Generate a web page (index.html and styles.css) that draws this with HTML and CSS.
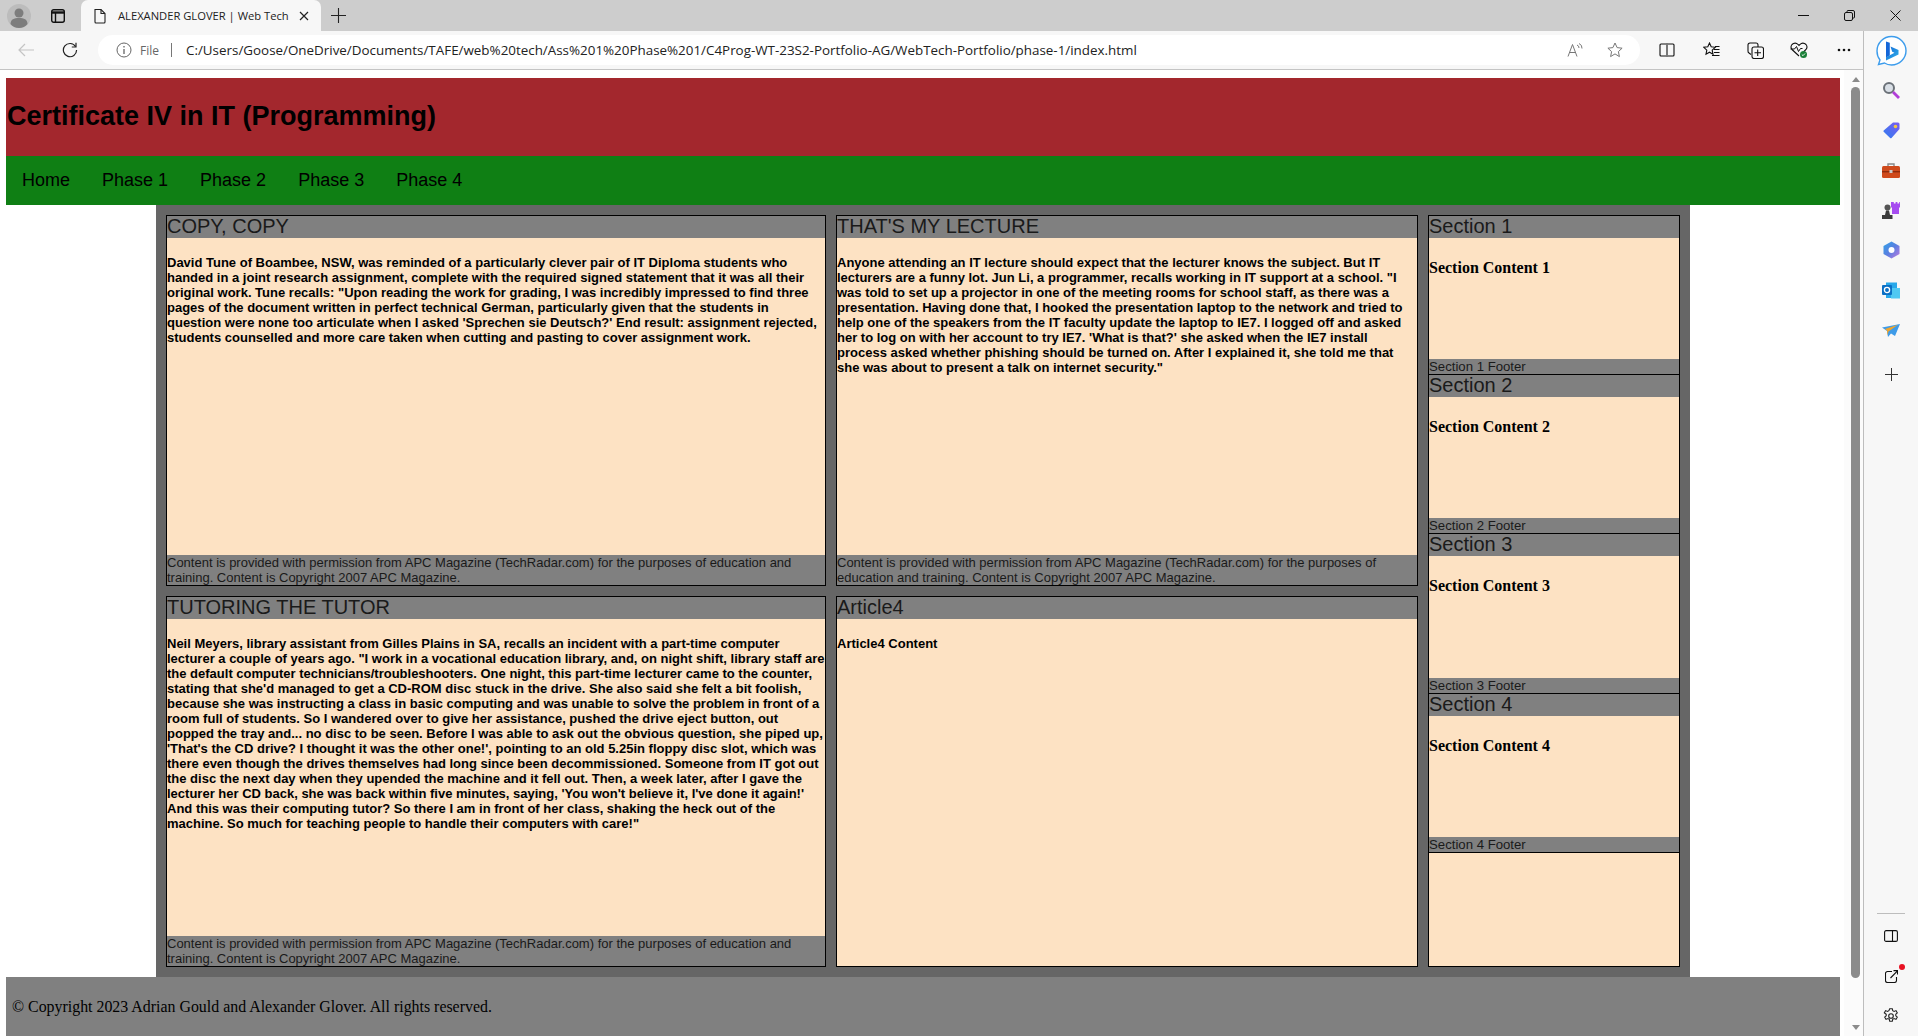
FILE: index.html
```html
<!DOCTYPE html>
<html lang="en">

<head>
  <meta charset="UTF-8">
  <meta name="viewport" content="width=device-width, initial-scale=1.0">
  <title>ALEXANDER GLOVER | Web Tech</title>
  <link rel="stylesheet" href="styles.css">
</head>

<body>
  <div class="tabbar">
    <span class="avatar">
      <svg width="24" height="24" viewBox="0 0 24 24"><circle cx="12" cy="12" r="12" fill="#bcbcbc"/><circle cx="12" cy="9" r="4.500" fill="#7d7d7d"/><path d="M3.500 20c0-4.500 3.500-6 8.500-6s8.500 1.500 8.500 6c-2 2.500-5 4-8.500 4s-6.500-1.500-8.500-4z" fill="#7d7d7d"/></svg>
    </span>
    <span class="tab-actions">
      <svg width="16" height="16" viewBox="0 0 16 16" fill="none" stroke="#111" stroke-width="1.400"><rect x="1.700" y="1.700" width="12.600" height="12.600" rx="2"/><path d="M1.700 4.500h12.600" stroke-width="2.400"/><path d="M5.500 5v9.300"/></svg>
    </span>
    <div class="tab">
      <svg width="14" height="16" viewBox="0 0 14 16" fill="none" stroke="#222" stroke-width="1.100"><path d="M2 1.500h6l4 4v8.500a1 1 0 0 1-1 1H3a1 1 0 0 1-1-1z"/><path d="M8 1.500v4h4"/></svg>
      <span class="tab-title">ALEXANDER GLOVER | Web Tech</span>
      <svg class="tab-close" width="10" height="10" viewBox="0 0 10 10" stroke="#222" stroke-width="1.200"><path d="M1 1l8 8M9 1l-8 8"/></svg>
    </div>
    <span class="tab-new">
      <svg width="15" height="15" viewBox="0 0 15 15" stroke="#222" stroke-width="1.100"><path d="M7.500 0v15M0 7.500h15"/></svg>
    </span>
    <div class="win-controls">
      <span><svg width="11" height="11" viewBox="0 0 11 11" stroke="#111" stroke-width="1"><path d="M0 5.500h11"/></svg></span>
      <span><svg width="11" height="11" viewBox="0 0 11 11" fill="none" stroke="#111" stroke-width="1"><rect x="0.500" y="2.500" width="8" height="8" rx="1.500"/><path d="M3 2.500V1.500a1 1 0 0 1 1-1h5a1.500 1.500 0 0 1 1.500 1.500v5a1 1 0 0 1-1 1h-1"/></svg></span>
      <span><svg width="11" height="11" viewBox="0 0 11 11" stroke="#111" stroke-width="1"><path d="M0.500 0.500l10 10M10.500 0.500l-10 10"/></svg></span>
    </div>
  </div>

  <div class="window">
    <div class="browser">
      <div class="toolbar">
        <span class="tool-btn">
          <svg width="16" height="14" viewBox="0 0 16 14" fill="none" stroke="#c4c4c4" stroke-width="1.200"><path d="M1 7h15M7 1L1 7l6 6"/></svg>
        </span>
        <span class="tool-btn">
          <svg width="16" height="16" viewBox="0 0 16 16" fill="none" stroke="#222" stroke-width="1.200"><path d="M13.600 4.600A6.600 6.600 0 1 0 14.600 8"/><path d="M14 0.800v4.200H9.800"/></svg>
        </span>
        <div class="address">
          <svg width="16" height="16" viewBox="0 0 16 16" fill="none" stroke="#666" stroke-width="1"><circle cx="8" cy="8" r="7"/><path d="M8 7v5M8 4v1.600" stroke-width="1.300"/></svg>
          <span class="addr-file">File</span>
          <span class="addr-sep"></span>
          <span class="addr-url">C:/Users/Goose/OneDrive/Documents/TAFE/web%20tech/Ass%201%20Phase%201/C4Prog-WT-23S2-Portfolio-AG/WebTech-Portfolio/phase-1/index.html</span>
          <svg width="16" height="16" viewBox="0 0 16 16" fill="none" stroke="#777" stroke-width="1"><path d="M1 14.500L5.500 2.500 10 14.500M2.600 10.500h5.800"/><path d="M10 3a3 3 0 0 1 2 3M12 1.500a5 5 0 0 1 3 5"/></svg>
          <svg class="addr-star" width="16" height="16" viewBox="0 0 16 16" fill="none" stroke="#777" stroke-width="1"><path d="M8 1l2.100 4.600 5 .6-3.700 3.400 1 5L8 11.900l-4.400 2.700 1-5L.9 6.200l5-.6z"/></svg>
        </div>
        <span class="tool-btn">
          <svg width="16" height="14" viewBox="0 0 16 14" fill="none" stroke="#111" stroke-width="1.100"><path d="M7 1H2a1 1 0 0 0-1 1v10a1 1 0 0 0 1 1h5M9 1h5a1 1 0 0 1 1 1v10a1 1 0 0 1-1 1H9M8 0v14"/></svg>
        </span>
        <span class="tool-btn">
          <svg width="17" height="16" viewBox="0 0 17 16" fill="none" stroke="#111" stroke-width="1.100"><path d="M6.500 1l1.700 3.800 4 .5-3 2.800.8 4.100-3.500-2-3.500 2 .8-4.100-3-2.800 4-.5z"/><path d="M11 7.500h5.500M11 10.500h5.500M9 13.500h7.500M12 4.500h4.500"/></svg>
        </span>
        <span class="tool-btn">
          <svg width="17" height="17" viewBox="0 0 17 17" fill="none" stroke="#111" stroke-width="1.100"><rect x="5" y="5" width="11.500" height="11.500" rx="2"/><path d="M10.700 7.500v6.500M7.500 10.700H14"/><path d="M4 12.500L2 11a2 2 0 0 1-1-2V3a2 2 0 0 1 2-2h6a2 2 0 0 1 2 2v2"/></svg>
        </span>
        <span class="tool-btn">
          <svg width="18" height="17" viewBox="0 0 18 17" fill="none"><path d="M9 14L2 7.500a4 4 0 0 1 0-5c1.800-1.800 4.500-1.800 6 0l1 1 1-1c1.500-1.800 4.200-1.800 6 0a4 4 0 0 1 0 5L14 9.500" stroke="#111" stroke-width="1.100"/><path d="M0.500 7h4l2-2.500 2 5 2-3h2" stroke="#111" stroke-width="1"/><circle cx="13.500" cy="12.500" r="3.500" fill="#1a7f37"/><path d="M11.800 12.500l1.200 1.200 2-2.200" stroke="#fff" stroke-width="0.900"/></svg>
        </span>
        <span class="tool-btn tool-more">
          <svg width="14" height="4" viewBox="0 0 14 4" fill="#111"><circle cx="2" cy="2" r="1.300"/><circle cx="7" cy="2" r="1.300"/><circle cx="12" cy="2" r="1.300"/></svg>
        </span>
      </div>

      <div class="viewport">
        <div class="page">
          <header class="site-head">
            <h1>Certificate IV in IT (Programming)</h1>
          </header>
          <nav class="site-nav">
            <a>Home</a>
            <a>Phase 1</a>
            <a>Phase 2</a>
            <a>Phase 3</a>
            <a>Phase 4</a>
          </nav>
          <main class="content">
            <article class="card card-a">
              <h2>COPY, COPY</h2>
              <div class="card-body">
                <p>David Tune of Boambee, NSW, was reminded of a particularly clever pair of IT Diploma students who handed in a joint research assignment, complete with the required signed statement that it was all their original work. Tune recalls: "Upon reading the work for grading, I was incredibly impressed to find three pages of the document written in perfect technical German, particularly given that the students in question were none too articulate when I asked 'Sprechen sie Deutsch?' End result: assignment rejected, students counselled and more care taken when cutting and pasting to cover assignment work.</p>
              </div>
              <footer>Content is provided with permission from APC Magazine (TechRadar.com) for the purposes of education and training. Content is Copyright 2007 APC Magazine.</footer>
            </article>
            <article class="card card-b">
              <h2>THAT'S MY LECTURE</h2>
              <div class="card-body">
                <p>Anyone attending an IT lecture should expect that the lecturer knows the subject. But IT lecturers are a funny lot. Jun Li, a programmer, recalls working in IT support at a school. "I was told to set up a projector in one of the meeting rooms for school staff, as there was a presentation. Having done that, I hooked the presentation laptop to the network and tried to help one of the speakers from the IT faculty update the laptop to IE7. I logged off and asked her to log on with her account to try IE7. 'What is that?' she asked when the IE7 install process asked whether phishing should be turned on. After I explained it, she told me that she was about to present a talk on internet security."</p>
              </div>
              <footer>Content is provided with permission from APC Magazine (TechRadar.com) for the purposes of education and training. Content is Copyright 2007 APC Magazine.</footer>
            </article>
            <aside class="side">
              <section class="side-sec">
                <h3>Section 1</h3>
                <div class="side-body"><h4>Section Content 1</h4></div>
                <footer>Section 1 Footer</footer>
              </section>
              <section class="side-sec">
                <h3>Section 2</h3>
                <div class="side-body"><h4>Section Content 2</h4></div>
                <footer>Section 2 Footer</footer>
              </section>
              <section class="side-sec">
                <h3>Section 3</h3>
                <div class="side-body"><h4>Section Content 3</h4></div>
                <footer>Section 3 Footer</footer>
              </section>
              <section class="side-sec">
                <h3>Section 4</h3>
                <div class="side-body"><h4>Section Content 4</h4></div>
                <footer>Section 4 Footer</footer>
              </section>
            </aside>
            <article class="card card-c">
              <h2>TUTORING THE TUTOR</h2>
              <div class="card-body">
                <p>Neil Meyers, library assistant from Gilles Plains in SA, recalls an incident with a part-time computer lecturer a couple of years ago. "I work in a vocational education library, and, on night shift, library staff are the default computer technicians/troubleshooters. One night, this part-time lecturer came to the counter, stating that she'd managed to get a CD-ROM disc stuck in the drive. She also said she felt a bit foolish, because she was instructing a class in basic computing and was unable to solve the problem in front of a room full of students. So I wandered over to give her assistance, pushed the drive eject button, out popped the tray and... no disc to be seen. Before I was able to ask out the obvious question, she piped up, 'That's the CD drive? I thought it was the other one!', pointing to an old 5.25in floppy disc slot, which was there even though the drives themselves had long since been decommissioned. Someone from IT got out the disc the next day when they upended the machine and it fell out. Then, a week later, after I gave the lecturer her CD back, she was back within five minutes, saying, 'You won't believe it, I've done it again!' And this was their computing tutor? So there I am in front of her class, shaking the heck out of the machine. So much for teaching people to handle their computers with care!"</p>
              </div>
              <footer>Content is provided with permission from APC Magazine (TechRadar.com) for the purposes of education and training. Content is Copyright 2007 APC Magazine.</footer>
            </article>
            <article class="card card-d">
              <h2>Article4</h2>
              <div class="card-body">
                <p>Article4 Content</p>
              </div>
            </article>
          </main>
          <footer class="site-foot">© Copyright 2023 Adrian Gould and Alexander Glover. All rights reserved.</footer>
        </div>
        <div class="scrollbar">
          <span class="arrow-up"></span>
          <span class="thumb"></span>
          <span class="arrow-down"></span>
        </div>
      </div>
    </div>

    <div class="sidebar">
      <span class="side-bing">
        <svg width="32" height="32" viewBox="0 0 32 32" fill="none"><defs><linearGradient id="bingGrad" x1="0" y1="0" x2="1" y2="1"><stop offset="0" stop-color="#1466d8"/><stop offset="1" stop-color="#31b4e8"/></linearGradient></defs><path d="M16.500 1.500C8.500 1.500 2 8 2 16c0 3.500 1 6.500 3 9l-1.500 4.500 6-1.500c2 1.300 4.500 2 7 2C24.500 30 31 23.500 31 15.800 31 8 24.500 1.500 16.500 1.500z" stroke="#3c9cec" stroke-width="1.400" fill="#fff"/><path d="M11 6.500l3.800 1.300v12.400l-3.800 2.500z" fill="#1466d8"/><path d="M15.500 11.500l8 3.500v4.500l-12.500 6-0-3.200 8.500-4.500-2.300-1.100z" fill="url(#bingGrad)"/></svg>
      </span>
      <span class="side-icon">
        <svg width="18" height="18" viewBox="0 0 18 18" fill="none"><circle cx="7" cy="7" r="5" fill="#d9dfe6" stroke="#6b7178" stroke-width="2"/><path d="M11 11l6 6" stroke="#b13ed8" stroke-width="2.800"/></svg>
      </span>
      <span class="side-icon">
        <svg width="17" height="17" viewBox="0 0 17 17"><defs><linearGradient id="tagGrad" x1="0" y1="1" x2="1" y2="0"><stop offset="0" stop-color="#2f7df0"/><stop offset="1" stop-color="#7a5cf0"/></linearGradient></defs><path d="M10 0.500h5a1.500 1.500 0 0 1 1.500 1.500v5L8.500 16a1 1 0 0 1-1.400 0L0.700 9.800a1 1 0 0 1 0-1.400z" fill="url(#tagGrad)"/><circle cx="12.500" cy="4.500" r="1.800" fill="#f4c542"/></svg>
      </span>
      <span class="side-icon">
        <svg width="18" height="15" viewBox="0 0 18 15"><path d="M6 3V1h6v2" fill="none" stroke="#888" stroke-width="1.400"/><rect y="3" width="18" height="12" rx="1.500" fill="#cf4a1c"/><rect y="8" width="18" height="1.400" fill="#8e2c0e"/><rect x="7.500" y="7" width="3" height="3" fill="#c9c9c9"/></svg>
      </span>
      <span class="side-icon">
        <svg width="18" height="18" viewBox="0 0 18 18"><path d="M10 0h1.800v1.500h1.800V0h1.800v1.500h1.800V0H18v5l-1 1v6h-7V6l-1-1V0z" fill="#a64cf0" transform="translate(0 1)"/><circle cx="5.500" cy="6.500" r="3" fill="#555"/><path d="M4 9.500h3l1 4.500h2.500v4H0v-4h3z" fill="#3c3c3c"/></svg>
      </span>
      <span class="side-icon">
        <svg width="17" height="18" viewBox="0 0 17 18"><defs><linearGradient id="m365Grad" x1="0" y1="0" x2="1" y2="1"><stop offset="0" stop-color="#2fa3e8"/><stop offset="0.500" stop-color="#5a7fe0"/><stop offset="1" stop-color="#c07ae0"/></linearGradient></defs><path d="M8.500 0.500l8 4.500v8l-8 4.500-8-4.500V5z" fill="url(#m365Grad)"/><circle cx="8.500" cy="9" r="3" fill="#fff"/></svg>
      </span>
      <span class="side-icon">
        <svg width="18" height="17" viewBox="0 0 18 17"><rect x="4" y="0.500" width="11" height="15.500" fill="#28a8ea"/><rect x="9" y="6" width="9" height="10.500" fill="#50c8f2"/><rect y="3" width="10" height="10" rx="1" fill="#0b6fc4"/><circle cx="5" cy="8" r="2.600" fill="none" stroke="#fff" stroke-width="1.300"/></svg>
      </span>
      <span class="side-icon">
        <svg width="18" height="13" viewBox="0 0 18 13"><path d="M0 3.500L18 0l-5 12-4-2.500-3 3.500-1-6z" fill="#3e9be8"/><path d="M3 5L16 0.800 6.500 7.500l-1 4-.5-5z" fill="#f0a52c"/></svg>
      </span>
      <span class="side-plus">
        <svg width="13" height="13" viewBox="0 0 13 13" stroke="#333" stroke-width="1"><path d="M6.500 0v13M0 6.500h13"/></svg>
      </span>
      <span class="side-spacer"></span>
      <span class="side-line"></span>
      <span class="side-icon">
        <svg width="14" height="12" viewBox="0 0 14 12" fill="none" stroke="#111" stroke-width="1.100"><rect x="0.600" y="0.600" width="12.800" height="10.800" rx="1.500"/><path d="M8.500 0.600v10.800"/></svg>
      </span>
      <span class="side-icon side-ext">
        <svg width="13" height="13" viewBox="0 0 13 13" fill="none" stroke="#111" stroke-width="1.100"><path d="M7 1.500H2.500a2 2 0 0 0-2 2v7a2 2 0 0 0 2 2h7a2 2 0 0 0 2-2V7"/><path d="M5.500 8L12.500 0.800M8.500 0.600h4v4"/></svg>
        <i class="red-dot"></i>
      </span>
      <span class="side-icon">
        <svg width="16" height="16" viewBox="0 0 16 16" fill="none" stroke="#222" stroke-width="1.100"><circle cx="8" cy="8" r="2.300"/><path d="M6.700 0.700h2.600l.4 2 1.400.7 1.900-.8 1.300 2.200-1.500 1.400v1.600l1.500 1.400-1.300 2.200-1.900-.8-1.400.7-.4 2H6.700l-.4-2-1.400-.7-1.900.8-1.300-2.200 1.500-1.400V6.200L1.300 4.800l1.300-2.200 1.900.8 1.400-.7z"/></svg>
      </span>
    </div>
  </div>
</body>

</html>
```

FILE: styles.css
```css
html,
body {
  margin: 0;
  height: 100%;
}

body {
  height: 1036px;
  overflow: hidden;
  display: flex;
  flex-direction: column;
  background: #f7f7f7;
  font-family: "Liberation Sans", Arial, sans-serif;
  color: #000;
}

/* browser chrome */
.tabbar {
  height: 31px;
  flex: none;
  display: flex;
  align-items: center;
  background: #cdcdcd;
}
.avatar {
  width: 38px;
  display: flex;
  justify-content: center;
}
.tab-actions {
  width: 40px;
  display: flex;
  justify-content: center;
}
.tab {
  width: 240px;
  height: 31px;
  margin-left: 3px;
  box-sizing: border-box;
  padding: 0 12px;
  display: flex;
  align-items: center;
  background: #f7f7f7;
  border-radius: 7px 7px 0 0;
}
.tab-title {
  flex: 1;
  margin-left: 11px;
  font-family: "Open Sans", sans-serif;
  font-size: 11.200px;
  color: #222;
  white-space: nowrap;
}
.tab-close {
  margin-left: 9px;
}
.tab-new {
  width: 34px;
  display: flex;
  justify-content: center;
}
.win-controls {
  margin-left: auto;
  display: flex;
}
.win-controls span {
  width: 46px;
  display: flex;
  justify-content: center;
}

.window {
  flex: 1;
  display: flex;
  min-height: 0;
}
.browser {
  width: 1864px;
  flex: none;
  display: flex;
  flex-direction: column;
  box-sizing: border-box;
  border-right: 1px solid #bdbdbd;
}
.toolbar {
  height: 39px;
  flex: none;
  box-sizing: border-box;
  padding-left: 4px;
  display: flex;
  align-items: center;
  border-bottom: 1px solid #c4c4c4;
}
.tool-btn {
  width: 44px;
  display: flex;
  justify-content: center;
}
.tool-more {
  width: 42px;
  padding-left: 4px;
  box-sizing: border-box;
}
.address {
  flex: 1;
  height: 30px;
  margin: 0 5px 0 6px;
  padding: 0 17px 0 18px;
  display: flex;
  align-items: center;
  background: #fff;
  border-radius: 15px;
}
.addr-file {
  margin-left: 8px;
  font-family: "Open Sans", sans-serif;
  font-size: 12px;
  color: #666;
}
.addr-sep {
  width: 1px;
  height: 14px;
  margin: 0 14px 0 12px;
  background: #777;
}
.addr-url {
  flex: 1;
  font-family: "Open Sans", sans-serif;
  font-size: 13.400px;
  color: #222;
  white-space: nowrap;
}
.addr-star {
  margin-left: 24px;
}

.viewport {
  flex: 1;
  display: flex;
  min-height: 0;
  background: #fff;
}
.scrollbar {
  width: 19px;
  flex: none;
  margin-left: auto;
  box-sizing: border-box;
  padding-left: 4px;
  display: flex;
  flex-direction: column;
  align-items: center;
  background: #fbfbfb;
}
.thumb {
  width: 9px;
  height: 891px;
  margin-top: 5px;
  background: #8b8b8b;
  border-radius: 5px;
}
.arrow-up,
.arrow-down {
  width: 0;
  height: 0;
  border-left: 4px solid transparent;
  border-right: 4px solid transparent;
}
.arrow-up {
  margin-top: 7px;
  border-bottom: 5px solid #8b8b8b;
}
.arrow-down {
  margin-top: 47px;
  border-top: 5px solid #8b8b8b;
}

/* right hand sidebar */
.sidebar {
  flex: 1;
  display: flex;
  flex-direction: column;
  align-items: center;
}
.side-bing {
  height: 39px;
  display: flex;
  align-items: center;
}
.side-icon {
  position: relative;
  height: 40px;
  display: flex;
  align-items: center;
  justify-content: center;
}
.side-plus {
  height: 48px;
  display: flex;
  align-items: center;
}
.side-spacer {
  flex: 1;
}
.side-line {
  width: 28px;
  height: 1px;
  margin-bottom: 2px;
  background: #bdbdbd;
}
.red-dot {
  position: absolute;
  top: 8px;
  left: 14px;
  width: 6px;
  height: 6px;
  border-radius: 50%;
  background: #e81123;
}

/* the page */
.page {
  width: 1844px;
  flex: none;
  box-sizing: border-box;
  padding: 8px 4px 0 6px;
}
.site-head {
  height: 78px;
  display: flex;
  align-items: center;
  background: #a3272d;
}
.site-head h1 {
  margin: 0 0 2px 1px;
  font-size: 27px;
}
.site-nav {
  height: 49px;
  display: flex;
  align-items: center;
  background: #0f7f14;
  font-size: 18px;
}
.site-nav a {
  padding: 0 16px;
}
.content {
  width: 1534px;
  height: 772px;
  margin: 0 auto;
  box-sizing: border-box;
  padding: 10px;
  display: grid;
  grid-template-columns: 660px 582px 252px;
  grid-template-rows: 1fr 1fr;
  gap: 10px;
  background: #666;
}
.card,
.side {
  border: 1px solid #000;
  background: #fde2c3;
  min-height: 0;
}
.card {
  display: flex;
  flex-direction: column;
}
.card h2,
.side-sec h3 {
  margin: 0;
  height: 22px;
  background: #808080;
  color: #1a1a1a;
  font-size: 20px;
  font-weight: normal;
  line-height: 21px;
}
.card-body {
  flex: 1;
}
.card-body p {
  margin: 17px 0 0;
  font-size: 13px;
  font-weight: bold;
  line-height: 15px;
}
.card footer {
  background: #808080;
  color: #1a1a1a;
  font-size: 13px;
  line-height: 15px;
}
.side-sec footer {
  background: #808080;
  color: #1a1a1a;
  font-size: 13.200px;
  line-height: 15px;
}
.side {
  grid-column: 3;
  grid-row: 1 / 3;
  display: flex;
  flex-direction: column;
}
.side-sec {
  height: 159.200px;
  flex: none;
  box-sizing: border-box;
  display: flex;
  flex-direction: column;
  border-bottom: 1px solid #000;
}
.side-body {
  flex: 1;
}
.side-body h4 {
  margin: 21px 0 0;
  font-family: "Liberation Serif", "Times New Roman", serif;
  font-size: 16px;
}
.site-foot {
  height: 60px;
  box-sizing: border-box;
  padding: 21px 6px 0;
  background: #808080;
  font-family: "Liberation Serif", "Times New Roman", serif;
  font-size: 15.900px;
}
.card-a { grid-column: 1; grid-row: 1; }
.card-b { grid-column: 2; grid-row: 1; }
.card-c { grid-column: 1; grid-row: 2; }
.card-d { grid-column: 2; grid-row: 2; }
```
